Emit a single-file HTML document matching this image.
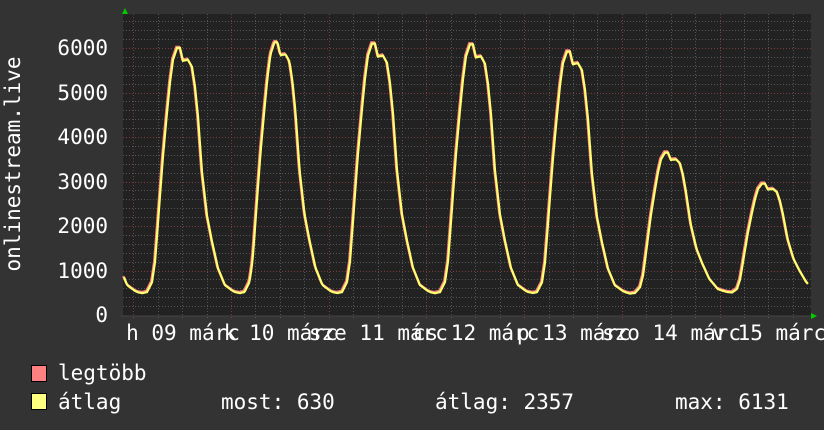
<!DOCTYPE html>
<html><head><meta charset="utf-8"><style>
html,body{margin:0;padding:0;background:#333;}
svg{display:block}
text{font-family:"DejaVu Sans Mono","Liberation Mono",monospace;font-size:21px;fill:#fff}
</style></head><body>
<svg id="g" width="824" height="430" viewBox="0 0 824 430" xmlns="http://www.w3.org/2000/svg">
<rect width="824" height="430" fill="#333"/>
<rect x="123" y="14" width="688" height="302" fill="#222"/>
<g id="grid"></g>
<path id="red" fill="none" stroke="#ff8080" stroke-width="2.2" transform="translate(-0.8,-1.2)"/>
<path id="yel" fill="none" stroke="#ffff70" stroke-width="2.2"/>
<line x1="121" y1="316" x2="812" y2="316" stroke="#444" stroke-width="1"/>
<polygon points="122,14 128,14 125,8" fill="#0c0"/>
<polygon points="811,313 811,319 817,316" fill="#0c0"/>
<g text-anchor="end">
<text x="108" y="55">6000</text>
<text x="108" y="100">5000</text>
<text x="108" y="144">4000</text>
<text x="108" y="189">3000</text>
<text x="108" y="233">2000</text>
<text x="108" y="278">1000</text>
<text x="108" y="322">0</text>
</g>
<text transform="translate(20,164) rotate(-90)" text-anchor="middle">onlinestream.live</text>
<g id="xl" text-anchor="middle"></g>
<rect x="31.5" y="365.5" width="15" height="16" fill="#ff8080" stroke="#000"/>
<rect x="31.5" y="393.5" width="15" height="16" fill="#ffff80" stroke="#000"/>
<text x="58" y="380">legtöbb</text>
<text x="58" y="409">átlag</text>
<text x="221" y="409">most: 630</text>
<text x="435" y="409">átlag: 2357</text>
<text x="675" y="409">max: 6131</text>
</svg>
<script>
var NS="http://www.w3.org/2000/svg";
var g=document.getElementById('grid');
function ln(x1,y1,x2,y2,c){var l=document.createElementNS(NS,'line');l.setAttribute('x1',x1);l.setAttribute('y1',y1);l.setAttribute('x2',x2);l.setAttribute('y2',y2);l.setAttribute('stroke',c);l.setAttribute('stroke-width','1');l.setAttribute('stroke-dasharray','1,2');g.appendChild(l);}
for(var i=1;i<=33;i++){var y=Math.round(315-i*8.9)+0.5;if(y<14)break;ln(123,y,811,y,(i%5==0)?'#7a3c3c':'#555');}
for(var k=0;k<40;k++){var x=108.9+k*24.425;if(x<124)continue;if(x>811)break;var red=(k%4==1);ln(Math.round(x)+0.5,14,Math.round(x)+0.5,320,red?'#7a3c3c':'#555');}
var names=["h 09 márc","k 10 márc","sze 11 márc","cs 12 márc","p 13 márc","szo 14 márc","v 15 márc"];
var xl=document.getElementById('xl');
for(var d=0;d<7;d++){var t=document.createElementNS(NS,'text');t.setAttribute('x',183+97.7*d);t.setAttribute('y',340);t.textContent=names[d];xl.appendChild(t);}
var T=[[-40,0],[-31,.008],[-26,.048],[-23,.13],[-21,.235],[-18,.4],[-15,.56],[-11,.738],[-8,.86],[-5,.952],[-1,1],[2,1],[5,.948],[10,.952],[14,.923],[17,.843],[20,.722],[24,.496],[29,.319],[34,.214],[40,.105],[47,.036],[55,.012],[62,0]];
function tf(dx){if(dx<=T[0][0]||dx>=T[T.length-1][0])return 0;for(var i=1;i<T.length;i++){if(dx<=T[i][0]){var a=T[i-1],b=T[i];return a[1]+(b[1]-a[1])*(dx-a[0])/(b[0]-a[0]);}}return 0;}
var peaks=[80.3,178,275.5,373,471,568,666,763];
var P=[6000,6000,6130,6100,6080,5920,3650,2950];
var B=470;
var d="";
for(var x=124;x<=808;x++){
 var v=B;
 for(var k=0;k<peaks.length;k++){
  var dx=x-peaks[k];
  if(k>=6&&dx>20)dx=20+(dx-20)*0.85;
  v+=(P[k]-B)*tf(dx);
 }
 var y=315-v*0.0445;
 d+=(x==124?"M":"L")+x+","+y.toFixed(1);
}
document.getElementById('red').setAttribute('d',d);
document.getElementById('yel').setAttribute('d',d);
</script>
</body></html>
